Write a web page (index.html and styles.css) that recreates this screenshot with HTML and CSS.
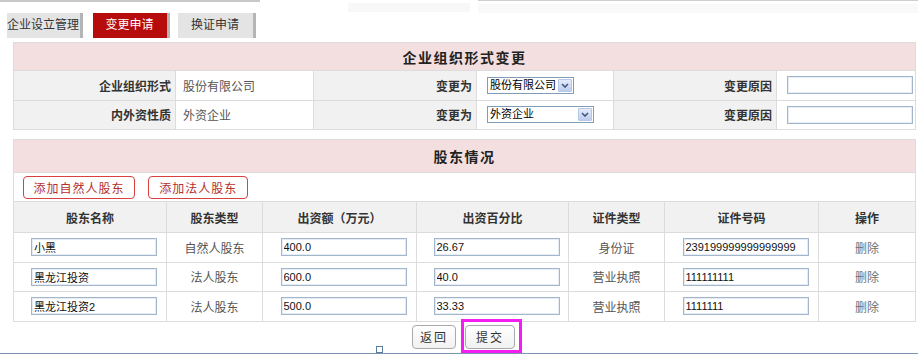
FILE: index.html
```html
<!DOCTYPE html>
<html lang="zh-CN">
<head>
<meta charset="utf-8">
<title>变更申请</title>
<link rel="stylesheet" href="styles.css">
</head>
<body>
<div class="page">
  <div class="topbar">
    <span class="tb-a"></span>
    <span class="tb-b"></span>
    <span class="tb-c"></span>
  </div>
  <div class="tabs">
    <span class="tab">企业设立管理</span>
    <span class="tab active">变更申请</span>
    <span class="tab wide">换证申请</span>
  </div>

  <table class="grid form-table">
    <colgroup>
      <col style="width:162px"><col style="width:138px"><col style="width:163px"><col style="width:137px"><col style="width:163px"><col style="width:139px">
    </colgroup>
    <tr class="title-row"><th colspan="6">企业组织形式变更</th></tr>
    <tr>
      <td class="label">企业组织形式</td>
      <td class="value">股份有限公司</td>
      <td class="label">变更为</td>
      <td class="value pad">
        <span class="sel sel-short"><span class="sel-text">股份有限公司</span><span class="sel-arrow"><svg width="8" height="5" viewBox="0 0 8 5"><path d="M1 1 L4 4 L7 1" fill="none" stroke="#3f5684" stroke-width="1.6"/></svg></span></span>
      </td>
      <td class="label">变更原因</td>
      <td class="value pad"><input class="txt" type="text" value=""></td>
    </tr>
    <tr>
      <td class="label">内外资性质</td>
      <td class="value">外资企业</td>
      <td class="label">变更为</td>
      <td class="value pad">
        <span class="sel sel-long"><span class="sel-text">外资企业</span><span class="sel-arrow"><svg width="8" height="5" viewBox="0 0 8 5"><path d="M1 1 L4 4 L7 1" fill="none" stroke="#3f5684" stroke-width="1.6"/></svg></span></span>
      </td>
      <td class="label">变更原因</td>
      <td class="value pad"><input class="txt" type="text" value=""></td>
    </tr>
  </table>

  <table class="grid holders">
    <colgroup>
      <col style="width:153px"><col style="width:96px"><col style="width:154px"><col style="width:152px"><col style="width:96px"><col style="width:154px"><col style="width:97px">
    </colgroup>
    <tr class="title-row title-tall"><th colspan="7">股东情况</th></tr>
    <tr class="btn-row">
      <td colspan="7">
        <button class="add-btn add-person">添加自然人股东</button>
        <button class="add-btn add-corp">添加法人股东</button>
      </td>
    </tr>
    <tr class="head-row">
      <th>股东名称</th><th>股东类型</th><th>出资额（万元）</th><th>出资百分比</th><th>证件类型</th><th>证件号码</th><th>操作</th>
    </tr>
    <tr class="data-row">
      <td class="in"><input class="txt" type="text" value="小黑"></td>
      <td>自然人股东</td>
      <td class="in"><input class="txt" type="text" value="400.0"></td>
      <td class="in"><input class="txt" type="text" value="26.67"></td>
      <td>身份证</td>
      <td class="in"><input class="txt" type="text" value="239199999999999999"></td>
      <td class="op">删除</td>
    </tr>
    <tr class="data-row">
      <td class="in"><input class="txt" type="text" value="黑龙江投资"></td>
      <td>法人股东</td>
      <td class="in"><input class="txt" type="text" value="600.0"></td>
      <td class="in"><input class="txt" type="text" value="40.0"></td>
      <td>营业执照</td>
      <td class="in"><input class="txt" type="text" value="111111111"></td>
      <td class="op">删除</td>
    </tr>
    <tr class="data-row">
      <td class="in"><input class="txt" type="text" value="黑龙江投资2"></td>
      <td>法人股东</td>
      <td class="in"><input class="txt" type="text" value="500.0"></td>
      <td class="in"><input class="txt" type="text" value="33.33"></td>
      <td>营业执照</td>
      <td class="in"><input class="txt" type="text" value="1111111"></td>
      <td class="op">删除</td>
    </tr>
  </table>

  <div class="actions">
    <button class="act-btn back">返回</button>
    <span class="highlight"><button class="act-btn submit">提交</button></span>
  </div>
  <div class="bottom-line"><span class="handle"></span></div>
</div>
</body>
</html>
```
FILE: styles.css
```css
* { box-sizing: border-box; }
html, body { margin: 0; padding: 0; background: #fff; }
body {
  font-family: "Liberation Sans", "Noto Sans CJK SC", sans-serif;
  font-size: 12px;
  color: #333;
  width: 918px;
  height: 354px;
  overflow: hidden;
}
.page { position: relative; width: 918px; height: 354px; }

.topbar { display: flex; height: 13px; }
.tb-a { width: 260px; border-top: 2px solid #c9c9c9; }
.tb-b { width: 122px; margin-left: 88px; margin-top: 3px; height: 9px; background: #f8f8f8; }
.tb-c { flex: 1; margin-left: 8px; border-top: 1px solid #cfcfcf; background: linear-gradient(#fff 0, #fff 3px, #f9f9f9 3px, #f9f9f9 14px); }

.tabs { display: flex; height: 25px; padding-left: 7px; gap: 10px; margin-bottom: 4px; }
.tab {
  width: 76px;
  height: 25px;
  line-height: 25px;
  text-align: center;
  background: #e4e4e4;
  border-right: 3px solid #b5b5b5;
  color: #333;
  font-size: 12px;
  padding-right: 1px;
}
.tab.active { width: 77px; background: #b70c0c; color: #fff; margin-right: -2px; }
.tab.wide { width: 78px; }

.grid {
  border-collapse: collapse;
  table-layout: fixed;
  width: 903px;
  margin-left: 13px;
}
.grid td, .grid th { border: 1px solid #dcdcdc; padding: 0; }

.title-row th {
  background: #f3dfdf;
  height: 28px;
  font-size: 14px;
  font-weight: bold;
  letter-spacing: 1.5px;
  color: #222;
  text-align: center;
}
.title-tall th { height: 33px; }

.form-table tr td { height: 29.5px; }
.form-table .label {
  background: #f1f1f1;
  text-align: right;
  padding-right: 4px;
  font-weight: bold;
  color: #333;
}
.form-table .value { background: #fff; padding-left: 7px; color: #555; }
.form-table .value.pad { padding-left: 10px; }

.form-table { margin-bottom: 9px; }

.sel {
  display: flex;
  align-items: stretch;
  height: 17px;
  border: 1px solid #7f9db9;
  background: #fff;
  color: #000;
}
.sel-short { width: 87px; }
.sel-long { width: 107px; }
.sel-text { flex: 1; padding-left: 2px; line-height: 15px; font-size: 11px; white-space: nowrap; overflow: hidden; }
.sel-arrow {
  width: 14px;
  flex: none;
  margin: 1px;
  display: flex;
  align-items: center;
  justify-content: center;
  background: linear-gradient(#e4ecfa, #bccdeb);
  border: 1px solid #b7c8e6;
  border-radius: 1px;
}

.txt {
  width: 126px;
  height: 18px;
  border: 1px solid #a4b6cc;
  box-shadow: inset 0 0 0 1px #e6ecf3;
  padding: 0 2px;
  font-family: "Liberation Sans", "Noto Sans CJK SC", sans-serif;
  font-size: 11px;
  color: #111;
  background: #fff;
  outline: none;
}

.btn-row td { height: 29px; padding-left: 9px; border-bottom-color: #dcdcdc; }
.add-btn {
  height: 23px;
  padding: 0;
  background: #fff;
  border: 1px solid #d8413f;
  border-radius: 4px;
  color: #b5302d;
  font-family: "Liberation Sans", "Noto Sans CJK SC", sans-serif;
  font-size: 12px;
  letter-spacing: 1px;
  vertical-align: middle;
}
.add-person { width: 112px; margin-right: 10px; }
.add-corp { width: 100px; }

.head-row th {
  background: #f1f1f1;
  height: 31px;
  font-weight: bold;
  color: #333;
  text-align: center;
  font-size: 12px;
}
.data-row td { height: 29.5px; text-align: center; color: #555; }
.data-row td.in { padding-left: 8px; }
.data-row td.op { color: #6f6f6f; }

.actions { display: flex; align-items: flex-start; height: 31px; padding-left: 412px; }
.act-btn {
  height: 24px;
  background: linear-gradient(#fff, #f1f1f1);
  border: 1px solid #a9a9a9;
  border-radius: 4px;
  font-family: "Liberation Sans", "Noto Sans CJK SC", sans-serif;
  font-size: 12px;
  letter-spacing: 2px;
  color: #333;
  padding: 0;
}
.back { width: 44px; margin-top: 3px; }
.highlight {
  display: block;
  margin-left: 5px;
  margin-top: -3px;
  width: 61px;
  height: 34px;
  border: 3px solid #f21ff0;
  padding: 3px 0 0 1px;
}
.submit { width: 50px; }

.bottom-line {
  height: 3px;
  background: #4d6a8f;
  border-top: 1px solid #7d95b3;
}
.handle {
  position: absolute;
  left: 376px;
  bottom: 1px;
  width: 7px;
  height: 7px;
  background: #fff;
  border: 1px solid #5b7aa0;
}
```
